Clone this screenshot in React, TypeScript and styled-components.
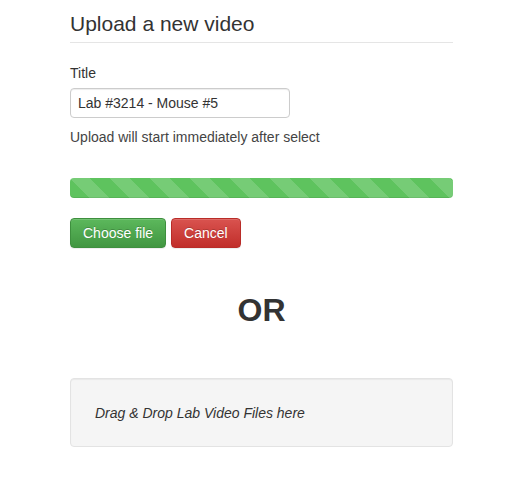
import React from "react";
import styled, { createGlobalStyle } from "styled-components";

const Global = createGlobalStyle`
  html, body { margin: 0; padding: 0; background: #fff; }
  body {
    font-family: "Liberation Sans", Arial, Helvetica, sans-serif;
    font-size: 14px;
    color: #333;
  }
`;

const Page = styled.div`
  width: 383px;
  padding: 0 0 0 70px;
`;

const Header = styled.h3`
  margin: 12px 0 0;
  font-size: 21px;
  font-weight: 400;
  line-height: 23px;
  padding-bottom: 7px;
  border-bottom: 1px solid #e5e5e5;
  color: #333;
`;

const Label = styled.label`
  display: block;
  margin-top: 20px;
  margin-bottom: 5px;
  line-height: 20px;
  font-size: 14px;
  color: #333;
`;

const Input = styled.input`
  display: block;
  box-sizing: border-box;
  width: 220px;
  height: 30px;
  padding: 0 7px;
  font-family: inherit;
  font-size: 14px;
  color: #333;
  border: 1px solid #ccc;
  border-radius: 4px;
  box-shadow: inset 0 1px 1px rgba(0, 0, 0, 0.075);
  outline: none;
`;

const Help = styled.p`
  margin: 9px 0 0;
  line-height: 20px;
  color: #444;
`;

const Progress = styled.div`
  margin-top: 31px;
  height: 20px;
  border-radius: 4px;
  overflow: hidden;
  background-color: #5ec35e;
  background-image: linear-gradient(
    45deg,
    rgba(255, 255, 255, 0.15) 25%,
    transparent 25%,
    transparent 50%,
    rgba(255, 255, 255, 0.15) 50%,
    rgba(255, 255, 255, 0.15) 75%,
    transparent 75%,
    transparent
  );
  background-size: 40px 40px;
  box-shadow: inset 0 -1px 0 rgba(0, 0, 0, 0.08);
`;

const Buttons = styled.div`
  display: flex;
  gap: 5px;
  margin-top: 20px;
`;

const Button = styled.button<{ $variant: "success" | "danger" }>`
  box-sizing: border-box;
  height: 30px;
  padding: 4px 12px;
  font-family: inherit;
  font-size: 14px;
  line-height: 20px;
  color: #fff;
  border-radius: 4px;
  cursor: pointer;
  text-shadow: 0 -1px 0 rgba(0, 0, 0, 0.2);
  box-shadow: inset 0 1px 0 rgba(255, 255, 255, 0.15), 0 1px 1px rgba(0, 0, 0, 0.075);
  border: 1px solid
    ${(p) => (p.$variant === "success" ? "#3e8f3e" : "#b92c28")};
  background-image: ${(p) =>
    p.$variant === "success"
      ? "linear-gradient(to bottom, #5cb85c 0%, #419641 100%)"
      : "linear-gradient(to bottom, #d9534f 0%, #c12e2a 100%)"};
`;

const Or = styled.h1`
  margin: 44px 0 0;
  text-align: center;
  font-size: 32px;
  font-weight: 700;
  line-height: 36px;
  color: #333;
`;

const DropZone = styled.div`
  box-sizing: border-box;
  margin-top: 50px;
  height: 69px;
  display: flex;
  align-items: center;
  padding-left: 24px;
  background: #f5f5f5;
  border: 1px solid #e3e3e3;
  border-radius: 4px;
  box-shadow: inset 0 1px 1px rgba(0, 0, 0, 0.05);
  font-style: italic;
  color: #333;
`;

export default function App() {
  return (
    <>
      <Global />
      <Page>
        <Header>Upload a new video</Header>
        <Label htmlFor="title">Title</Label>
        <Input id="title" defaultValue="Lab #3214 - Mouse #5" />
        <Help>Upload will start immediately after select</Help>
        <Progress />
        <Buttons>
          <Button $variant="success">Choose file</Button>
          <Button $variant="danger">Cancel</Button>
        </Buttons>
        <Or>OR</Or>
        <DropZone>Drag &amp; Drop Lab Video Files here</DropZone>
      </Page>
    </>
  );
}
